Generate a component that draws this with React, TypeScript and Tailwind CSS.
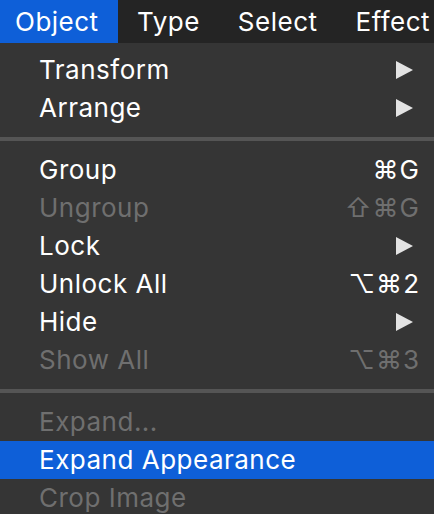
import React from "react";

type Item = {
  label: string;
  disabled?: boolean;
  active?: boolean;
  submenu?: boolean;
  shortcut?: string;
};

const sections: Item[][] = [
  [
    { label: "Transform", submenu: true },
    { label: "Arrange", submenu: true },
  ],
  [
    { label: "Group", shortcut: "⌘G" },
    { label: "Ungroup", shortcut: "⇧⌘G", disabled: true },
    { label: "Lock", submenu: true },
    { label: "Unlock All", shortcut: "⌥⌘2" },
    { label: "Hide", submenu: true },
    { label: "Show All", shortcut: "⌥⌘3", disabled: true },
  ],
  [
    { label: "Expand...", disabled: true },
    { label: "Expand Appearance", active: true },
    { label: "Crop Image", disabled: true },
  ],
];

function Arrow() {
  return (
    <svg width="17" height="18" viewBox="0 0 17 18" className="mr-[7px]">
      <polygon points="0,0 17,9 0,18" fill="#e3e3e3" />
    </svg>
  );
}

function MenuRow({ item }: { item: Item }) {
  const color = item.disabled ? "text-[#6f6f6f]" : "text-white";
  return (
    <div
      className={`flex items-center justify-between h-[38px] pl-[39px] pr-[14px] ${
        item.active ? "bg-[#0e5fd8]" : ""
      } ${color}`}
    >
      <span className="tracking-[0.5px]">{item.label}</span>
      {item.submenu && <Arrow />}
      {item.shortcut && (
        <span className="tracking-[1px]">{item.shortcut}</span>
      )}
    </div>
  );
}

export default function App() {
  return (
    <div
      className="w-[434px] h-[514px] overflow-hidden bg-[#353535] text-[26px] leading-none"
      style={{ fontFamily: "Inter, 'DejaVu Sans', sans-serif" }}
    >
      {/* barra de menu */}
      <div className="flex h-[43px] bg-[#242424] text-white whitespace-nowrap tracking-[0.5px]">
        <div className="flex items-center h-full w-[118px] pl-[15px] bg-[#0e5fd8]">
          Object
        </div>
        <div className="flex items-center pl-[19px]">Type</div>
        <div className="flex items-center pl-[38px]">Select</div>
        <div className="flex items-center pl-[38px]">Effect</div>
      </div>

      <div className="pt-[8px]">
        {sections.map((section, i) => (
          <div key={i}>
            {i > 0 && <div className="my-[10px] h-[4px] bg-[#555555]" />}
            {section.map((item) => (
              <MenuRow key={item.label} item={item} />
            ))}
          </div>
        ))}
      </div>
    </div>
  );
}
